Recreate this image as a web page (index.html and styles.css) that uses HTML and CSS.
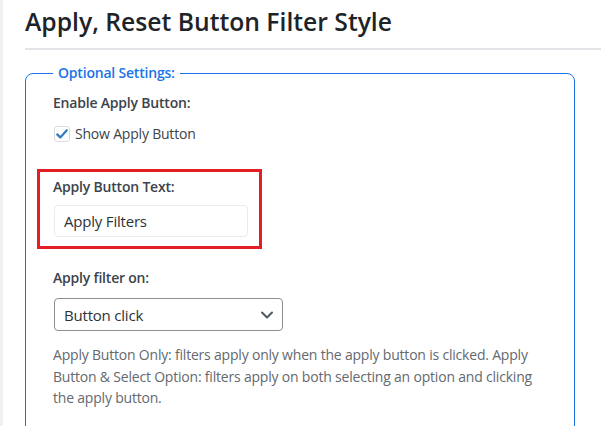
FILE: index.html
```html
<!DOCTYPE html>
<html lang="en">
<head>
<meta charset="utf-8">
<title>Apply, Reset Button Filter Style</title>
<link rel="stylesheet" href="styles.css">
</head>
<body>
<div class="page">
  <aside class="strip"></aside>
  <main class="main">
    <h1 class="title">Apply, Reset Button Filter Style</h1>
    <hr class="rule">
    <fieldset class="settings">
      <legend class="legend">Optional Settings:</legend>
      <div class="field">
        <div class="label">Enable Apply Button:</div>
        <label class="check">
          <span class="box">
            <svg width="14" height="14" viewBox="0 0 14 14"><path d="M2.2 7.4 L5.3 10.4 L11.8 3.2" fill="none" stroke="#2f7cc4" stroke-width="2.2" stroke-linecap="round" stroke-linejoin="round"/></svg>
          </span>
          <span>Show Apply Button</span>
        </label>
      </div>
      <div class="highlight">
        <div class="label">Apply Button Text:</div>
        <div class="input">Apply Filters</div>
      </div>
      <div class="field field-select">
        <div class="label">Apply filter on:</div>
        <div class="select">
          <span>Button click</span>
          <svg width="14" height="10" viewBox="0 0 14 10"><path d="M2 2.5 L7 7.5 L12 2.5" fill="none" stroke="#50575e" stroke-width="2" stroke-linecap="round" stroke-linejoin="round"/></svg>
        </div>
        <p class="desc">Apply Button Only: filters apply only when the apply button is clicked. Apply Button &amp; Select Option: filters apply on both selecting an option and clicking the apply button.</p>
      </div>
    </fieldset>
  </main>
</div>
</body>
</html>
```

FILE: styles.css
```css
* { box-sizing: border-box; }
html, body { margin: 0; padding: 0; background: #fff; }
body {
  font-family: "Open Sans", "Noto Sans", sans-serif;
  color: #3c434a;
  width: 601px;
  height: 426px;
  overflow: hidden;
  letter-spacing: -0.2px;
}
.page { display: flex; height: 426px; }
.strip { width: 3px; background: #f0f0f1; flex: none; }
.main { flex: 1; padding-left: 22px; }
.title {
  margin: 0;
  padding: 6px 0 0 0;
  font-size: 24.7px;
  line-height: 32px;
  font-weight: 600;
  color: #1d2327;
  letter-spacing: 0;
}
.rule {
  margin: 10px 0 0 0;
  border: 0;
  height: 2px;
  background: #e2e4e7;
}
.settings {
  margin: 13px 0 0 0;
  width: 550px;
  border: 1px solid #1a73e8;
  border-radius: 8px;
  padding: 10px 12px 0 27px;
  min-height: 400px;
}
.legend {
  padding: 0 5px;
  color: #1a73e8;
  font-size: 14px;
  font-weight: 600;
  line-height: 20px;
}
.label {
  font-size: 14px;
  font-weight: 600;
  line-height: 20px;
  color: #3c434a;
}
.check {
  display: flex;
  align-items: center;
  gap: 5px;
  margin-top: 11px;
  font-size: 14px;
  line-height: 20px;
  margin-left: 1px;
}
.box {
  width: 16px; height: 16px;
  border: 1px solid #dcdcde;
  border-radius: 3px;
  display: flex;
  align-items: center;
  justify-content: center;
}
.highlight {
  margin: 25px 0 0 -16px;
  width: 225px;
  border: 3px solid #e31e24;
  padding: 5px 11px 9px 13px;
}
.input {
  margin: 8px 0 0 1px;
  height: 32px;
  border: 1px solid #ebebeb;
  border-radius: 4px;
  padding: 0 9px;
  font-size: 15px;
  line-height: 30px;
  color: #2c3338;
}
.field-select { margin-top: 19px; }
.select {
  margin: 10px 0 0 1px;
  width: 229px;
  height: 33px;
  border: 1px solid #8c8f94;
  border-radius: 4px;
  padding: 0 8px 0 9px;
  display: flex;
  align-items: center;
  justify-content: space-between;
  font-size: 15px;
  color: #2c3338;
}
.desc {
  margin: 13px 0 0 0;
  font-size: 14px;
  line-height: 21.5px;
  color: #646970;
  max-width: 495px;
}
```
